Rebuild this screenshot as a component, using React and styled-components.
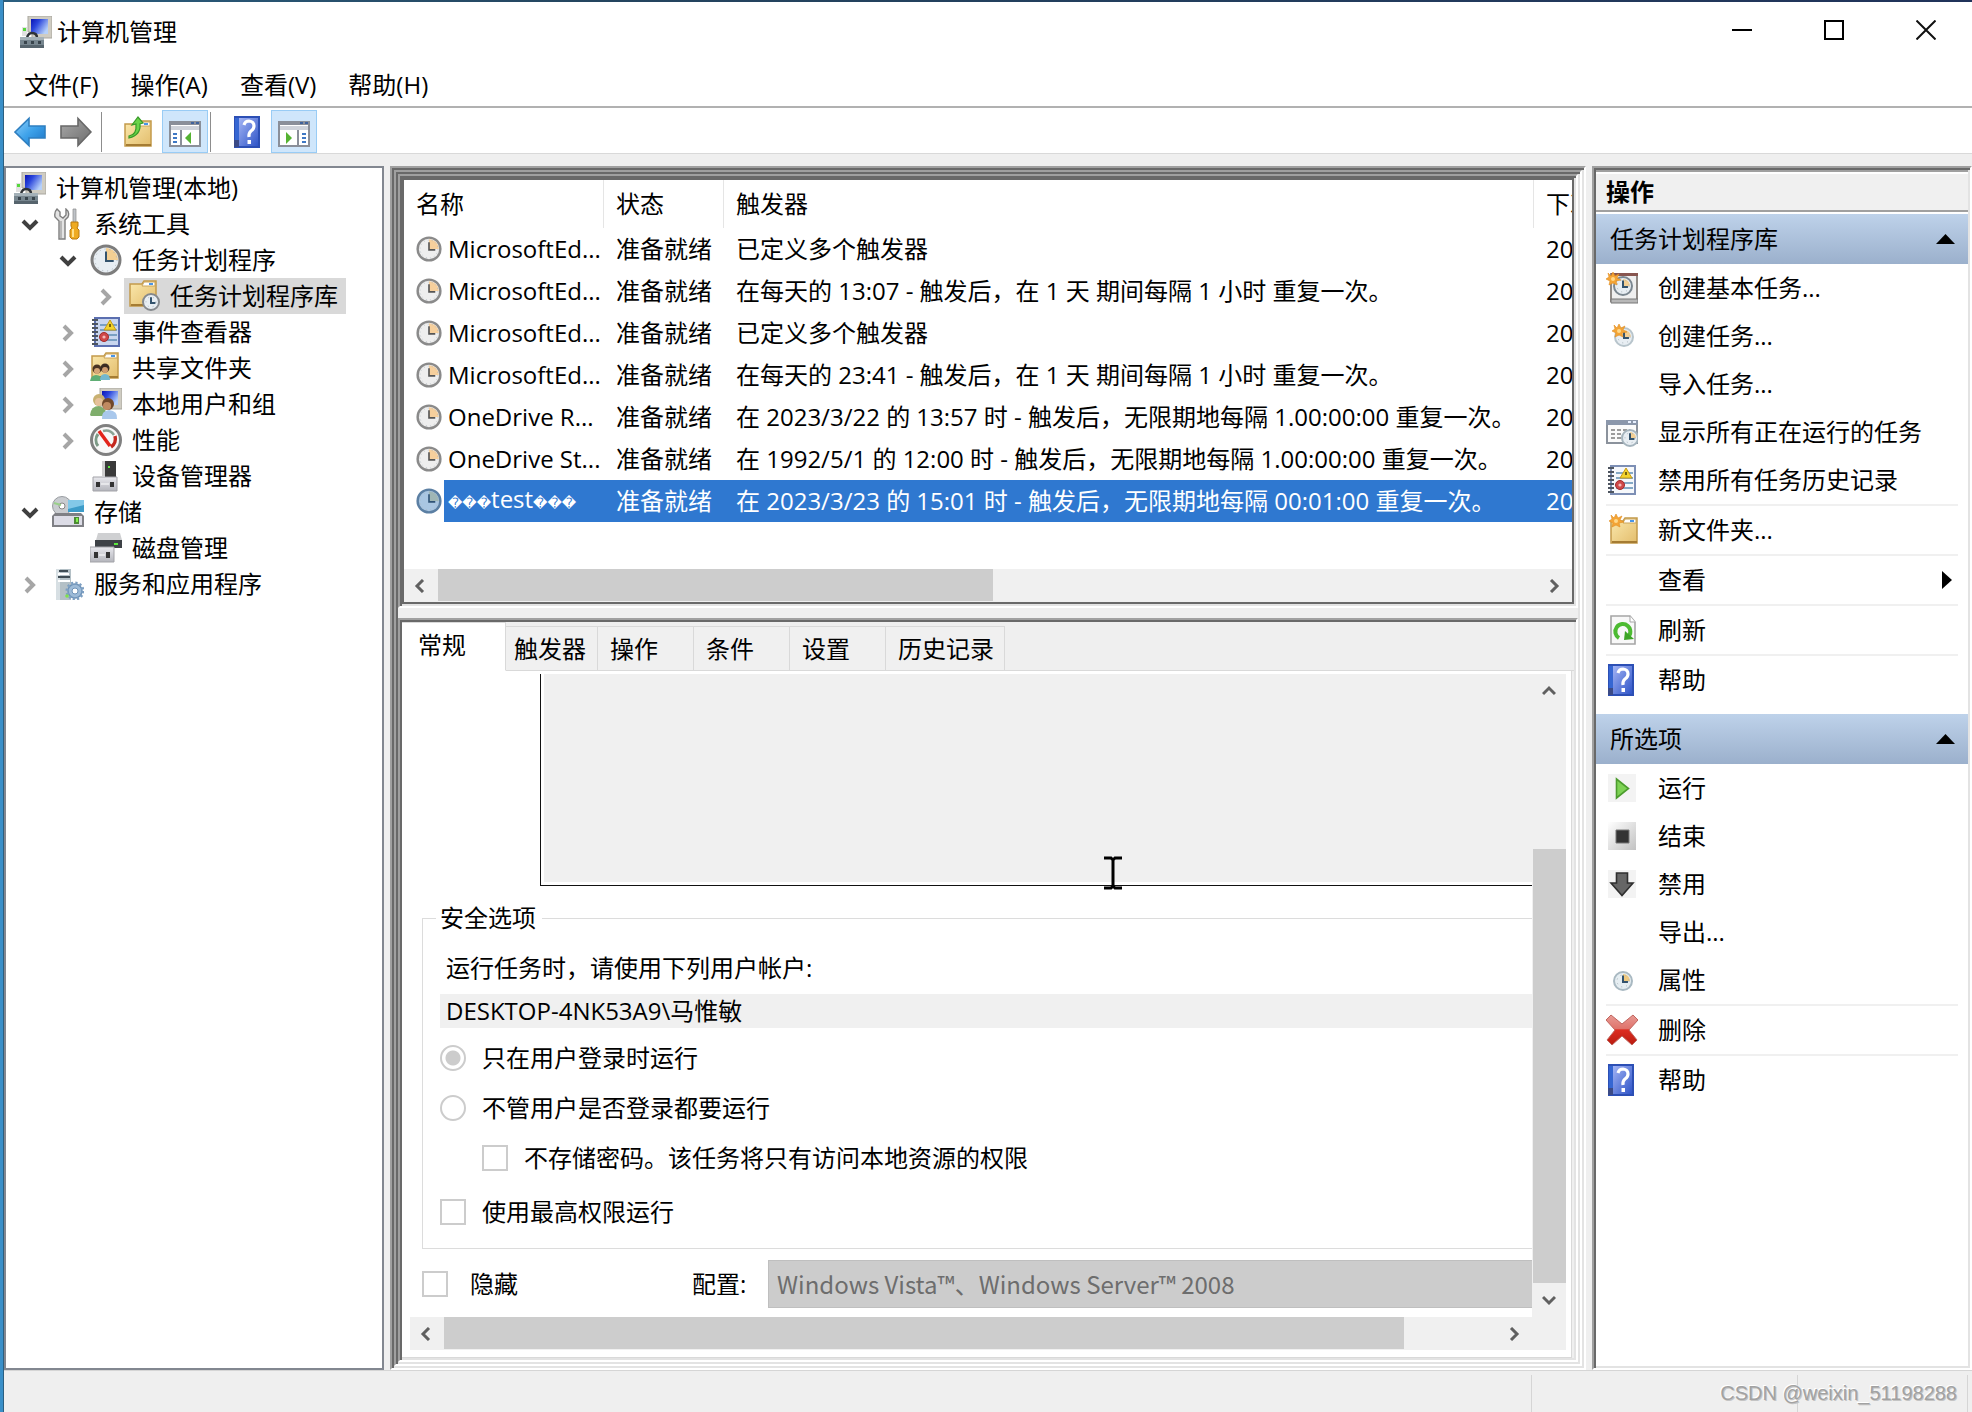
import React from "react";
import styled, { createGlobalStyle, css } from "styled-components";

const FONT = '"Open Sans", "Noto Sans CJK SC", sans-serif';
const FONT_CJK = '"Noto Sans CJK SC", "Noto Sans", sans-serif';

const GlobalStyle = createGlobalStyle`
  * { box-sizing: border-box; }
  body { margin: 0; background: #efefef; }
  button, input, select, textarea { font: inherit; color: inherit; margin: 0; }
  button { border: 0; padding: 0; background: none; text-align: left; cursor: default; }
`;

/* ---------- window frame ---------- */

const Desktop = styled.div`
  min-height: 100vh;
  display: flex;
  flex-direction: column;
  padding: 2px 0 0 4px;
  background: linear-gradient(90deg, #3a8fc8 0, #3a8fc8 3px, #2b5f80 3px, #24455f 30%, #20335a 100%);
  font: 400 24px/36px ${FONT};
  color: #000;
`;

const Window = styled.div`
  flex: 1;
  display: flex;
  flex-direction: column;
  background: #efefef;
`;

const TitleBar = styled.header`
  display: flex;
  height: 60px;
  padding-left: 16px;
  background: #fff;
`;

const Title = styled.h1`
  flex: 1;
  display: flex;
  align-items: center;
  gap: 5px;
  margin: 0;
  font-size: 24px;
  font-weight: 400;
`;

const CaptionButton = styled.button`
  width: 92px;
  height: 56px;
  display: grid;
  place-items: center;
`;

const MenuBar = styled.nav`
  display: flex;
  height: 46px;
  padding-left: 4px;
  background: #fff;
  border-bottom: 2px solid #b1b1b1;
`;

const MenuButton = styled.button`
  padding: 2px 16px 0;
`;

const ToolBar = styled.div`
  display: flex;
  height: 46px;
  padding: 2px 0 0 3px;
  background: #fff;
  border-bottom: 1px solid #d9d9d9;
`;

const ToolButton = styled.button`
  width: 46px;
  height: 43px;
  display: grid;
  place-items: center;
  border: 1px solid ${(p) => (p.$on ? "#99ccf5" : "transparent")};
  background: ${(p) => (p.$on ? "#cfe6fb" : "transparent")};
`;

const ToolDivider = styled.span`
  width: 1px;
  height: 40px;
  margin: 2px 14px 0 2px;
  background: #8d8d8d;
`;

const Body = styled.main`
  flex: 1;
  display: grid;
  grid-template-columns: 380px minmax(0, 1fr) 380px;
  gap: 6px;
  padding-top: 12px;
`;

const StatusBar = styled.footer`
  position: relative;
  display: grid;
  grid-template-columns: 1fr 266px 170px 4px;
  height: 42px;
  padding-top: 4px;
  border-top: 1px solid #d5d5d5;
`;

const StatusCell = styled.span`
  border-right: 1px solid #d5d5d5;
`;

const Watermark = styled.span`
  position: absolute;
  right: 15px;
  bottom: 1px;
  font: 20px/36px "Liberation Sans", sans-serif;
  color: #a2a2a2;
  text-shadow: 1px 1px 0 #c4c4c4, -1px -1px 0 #fff;
`;

/* ---------- tree ---------- */

const TreePane = styled.ul`
  margin: 0;
  padding: 2px 0 0;
  list-style: none;
  background: #fff;
  border: 2px solid #828790;
`;

const TreeRow = styled.li`
  display: flex;
  height: 36px;
  padding-left: ${(p) => (p.$level ? 8 + (p.$level - 1) * 38 : 4)}px;
`;

const Twisty = styled.button`
  width: 32px;
  margin-right: 2px;
  padding-top: 2px;
  display: grid;
  place-items: center;
`;

const TreeLabel = styled.button`
  display: flex;
  align-items: center;
  gap: 10px;
  padding: 0 8px 0 4px;
  background: ${(p) => (p.$selected ? "#d9d9d9" : "transparent")};
`;

/* ---------- sunken frames ---------- */

const sunken = css`
  border: 2px solid;
  border-color: #a0a0a0 #fff #fff #a0a0a0;
  box-shadow: inset 2px 2px 0 #696969, inset -2px -2px 0 #e3e3e3;
  padding: 2px;
`;

const Frame = styled.div`
  ${sunken}
  display: flex;
  flex-direction: column;
  min-width: 0;
  & > * { flex: 1; }
`;

const Split = styled.div`
  display: flex;
  flex-direction: column;
  gap: 10px;
  min-width: 0;
`;

const ListFrame = styled.section`
  ${sunken}
  height: 434px;
`;

const ListBox = styled.div`
  height: 100%;
  display: flex;
  flex-direction: column;
  background: #fff;
  border: 2px solid #696969;
`;

const TaskTable = styled.table`
  width: 100%;
  table-layout: fixed;
  border-collapse: separate;
  border-spacing: 0;
`;

const HeadCell = styled.th`
  height: 48px;
  padding: 0 0 0 12px;
  font-weight: 400;
  text-align: left;
  white-space: nowrap;
  overflow: hidden;
  border-right: ${(p) => (p.$last ? 0 : 1)}px solid #e5e5e5;
`;

const Cell = styled.td`
  height: 42px;
  padding: 0 0 0 12px;
  white-space: nowrap;
  overflow: hidden;
  color: ${(p) => (p.$selected ? "#fff" : "#000")};
  background: ${(p) => (p.$selected ? "#2f78d0" : "#fff")};
`;

const NameCell = styled(Cell)`
  background: ${(p) => (p.$selected ? "linear-gradient(90deg, #fff 40px, #2f78d0 40px)" : "#fff")};
`;

const NameBox = styled.div`
  display: flex;
  align-items: center;
  gap: 6px;
`;

const Unknown = styled.span`
  font-family: "DejaVu Sans", sans-serif;
  font-size: 14px;
`;

const Fill = styled.div`
  flex: 1;
`;

/* ---------- scroll bars ---------- */

const HBar = styled.div`
  display: grid;
  grid-template-columns: 34px minmax(0, 1fr) 38px;
  height: 33px;
  background: #f0f0f0;
`;

const VBar = styled.div`
  display: grid;
  grid-template-rows: 34px minmax(0, 1fr) 34px;
  width: 34px;
  background: #f0f0f0;
`;

const ScrollButton = styled.button`
  display: grid;
  place-items: center;
`;

const HTrack = styled.div`
  display: flex;
  padding-bottom: 1px;
`;

const VTrack = styled.div`
  display: flex;
  flex-direction: column;
  justify-content: flex-end;
  padding-left: 1px;
`;

const Thumb = styled.div`
  background: #cdcdcd;
`;

/* ---------- details ---------- */

const DetailFrame = styled.section`
  ${sunken}
  flex: 1;
  display: flex;
  flex-direction: column;
  min-height: 0;
`;

const TabList = styled.div`
  display: flex;
  align-items: flex-end;
  height: 49px;
  box-shadow: inset 0 -1px 0 #d9d9d9;
`;

const Tab = styled.button`
  min-width: ${(p) => (p.$selected ? 104 : p.$tight ? 92 : 96)}px;
  height: ${(p) => (p.$selected ? 49 : 45)}px;
  padding: 0 10px ${(p) => (p.$selected ? 4 : 0)}px ${(p) => (p.$selected ? 16 : p.$tight ? 8 : 12)}px;
  border: 1px solid #d9d9d9;
  border-left: 0;
  border-bottom-color: ${(p) => (p.$selected ? "#fff" : "#d9d9d9")};
  background: ${(p) => (p.$selected ? "#fff" : "#f0f0f0")};
`;

const TabPage = styled.div`
  flex: 1;
  display: grid;
  grid-template-columns: minmax(0, 1fr) 34px;
  grid-template-rows: minmax(0, 1fr) 33px;
  margin-right: 2px;
  padding: 3px 5px 7px 8px;
  background: #fff;
  border-right: 1px solid #d9d9d9;
  border-bottom: 1px solid #d9d9d9;
`;

const Form = styled.form`
  position: relative;
  overflow: hidden;
`;

const Description = styled.textarea`
  display: block;
  width: calc(100% - 130px);
  height: 212px;
  margin-left: 130px;
  padding: 0 0 3px 3px;
  border: solid #111;
  border-width: 0 0 1px 1px;
  border-radius: 0;
  outline: 0;
  resize: none;
  background: #f0f0f0 content-box;
`;

const Group = styled.fieldset`
  margin: 14px 0 0 12px;
  padding: 0 0 11px 17px;
  border: 1px solid #dcdcdc;
  border-right: 0;
`;

const Legend = styled.legend`
  margin-left: -4px;
  padding: 0 6px 0 4px;
`;

const AccountLabel = styled.label`
  display: block;
  padding: 14px 0 8px 6px;
`;

const AccountInput = styled.input`
  display: block;
  width: 100%;
  height: 34px;
  margin-bottom: 5px;
  padding: 0 6px;
  border: 0;
  border-radius: 0;
  background: #f0f0f0;
`;

const Option = styled.label`
  display: flex;
  align-items: center;
  gap: 16px;
  height: 50px;
  margin-top: ${(p) => (p.$apart ? 4 : 0)}px;
  padding-left: ${(p) => (p.$nested ? 42 : 0)}px;
`;

const Tick = styled.input`
  appearance: none;
  flex: none;
  width: 26px;
  height: 26px;
  border: 2px solid #ccc;
  background: #fff;
`;

const Radio = styled(Tick)`
  border-radius: 50%;
  &:checked { background: radial-gradient(circle, #ccc 7px, #fff 8px); }
`;

const BottomRow = styled.div`
  display: grid;
  grid-template-columns: 270px 76px minmax(0, 1fr);
  align-items: center;
  margin: 11px 0 0 12px;
`;

const HiddenOption = styled.label`
  display: flex;
  align-items: center;
  gap: 22px;
`;

const ConfigSelect = styled.select`
  appearance: none;
  width: 100%;
  height: 48px;
  padding: 0 8px;
  border: solid #bfbfbf;
  border-width: 1px 0 1px 1px;
  border-radius: 0;
  background: #ccc;
  color: #6d6d6d;
  font-family: ${FONT_CJK};
  opacity: 1;
`;

const Pointer = styled.svg`
  position: absolute;
  left: 693px;
  top: 182px;
`;

/* ---------- actions ---------- */

const ActionPane = styled.aside`
  display: flex;
  flex-direction: column;
  border: 2px solid;
  border-color: #a0a0a0 #fff #fff #a0a0a0;
  box-shadow: inset 2px 2px 0 #696969, inset -2px -2px 0 #e3e3e3;
  padding: 2px;
  background: #fff;
`;

const ActionTitle = styled.h2`
  height: 42px;
  margin: 0 0 2px;
  padding: 2px 10px 0;
  font-size: 24px;
  font-weight: 700;
  background: #f0f0f0;
  border-top: 2px solid #a0a0a0;
  border-bottom: 2px solid #a0a0a0;
  box-shadow: inset 0 2px 0 #fff;
`;

const SectionHead = styled.button`
  display: flex;
  align-items: center;
  justify-content: space-between;
  height: 50px;
  padding: 0 13px 0 14px;
  background: linear-gradient(#bed2ea, #9bb0cc);
`;

const ActionList = styled.ul`
  margin: 0 10px 10px;
  padding: 0;
  list-style: none;
`;

const ActionItem = styled.li`
  border-top: ${(p) => (p.$divided ? 2 : 0)}px solid #f0f0f0;
`;

const ActionButton = styled.button`
  display: grid;
  grid-template-columns: 32px 1fr auto;
  align-items: center;
  gap: 20px;
  width: 100%;
  height: 48px;
  padding-right: 6px;
`;

/* ---------- icons ---------- */

const Svg = ({ size = 32, children }) => (
  <svg width={size} height={size} viewBox="0 0 32 32" aria-hidden="true" style={{ display: "block" }}>
    {children}
  </svg>
);

const Defs = () => (
  <svg width="0" height="0" style={{ position: "absolute" }} aria-hidden="true">
    <defs>
      <linearGradient id="screen" x1="0" y1="0" x2="1" y2="0.6">
        <stop offset="0" stopColor="#0a14b4" /><stop offset="0.4" stopColor="#2b46dc" /><stop offset="1" stopColor="#b5d0fa" />
      </linearGradient>
      <linearGradient id="folder" x1="0" y1="0" x2="1" y2="1">
        <stop offset="0" stopColor="#fbe9ae" /><stop offset="1" stopColor="#e3bd6c" />
      </linearGradient>
      <linearGradient id="blue" x1="0" y1="0" x2="1" y2="1">
        <stop offset="0" stopColor="#8fd0fb" /><stop offset="0.5" stopColor="#3ea2ea" /><stop offset="1" stopColor="#1a72c4" />
      </linearGradient>
      <linearGradient id="grey" x1="0" y1="0" x2="1" y2="1">
        <stop offset="0" stopColor="#a9a9a9" /><stop offset="1" stopColor="#6c6c6c" />
      </linearGradient>
      <linearGradient id="book" x1="0" y1="0" x2="1" y2="1">
        <stop offset="0" stopColor="#a3b4f4" /><stop offset="1" stopColor="#2f55c8" />
      </linearGradient>
      <linearGradient id="metal" x1="0" y1="0" x2="0" y2="1">
        <stop offset="0" stopColor="#e9e9ee" /><stop offset="1" stopColor="#b4b5bc" />
      </linearGradient>
      <linearGradient id="stop" x1="0" y1="0" x2="1" y2="1">
        <stop offset="0" stopColor="#fff" /><stop offset="1" stopColor="#c2c2c2" />
      </linearGradient>
      <linearGradient id="red" x1="0" y1="0" x2="0" y2="1">
        <stop offset="0" stopColor="#e79a94" /><stop offset="0.45" stopColor="#e0746c" /><stop offset="0.5" stopColor="#dd2c20" /><stop offset="1" stopColor="#b81c10" />
      </linearGradient>
    </defs>
  </svg>
);

const Face = ({ x = 16, y = 16, r = 14, ring = "#7d7d7d", fill = "#e8eef3", wedge = "#f3cf93", hand = "#33536d" }) => (
  <g>
    <circle cx={x} cy={y} r={r} fill={fill} stroke={ring} strokeWidth={r > 10 ? 3 : 2} />
    <path d={`M${x} ${y}V${y - r + 2}A${r - 2} ${r - 2} 0 0 1 ${x + r - 2} ${y}Z`} fill={wedge} />
    <circle cx={x} cy={y} r={r - 3} fill="none" stroke="#a9b4bc" strokeWidth="1" strokeDasharray="1 4" />
    <path d={`M${x} ${y - r * 0.6}V${y + 1}H${x + r * 0.55}`} fill="none" stroke={hand} strokeWidth="2" />
  </g>
);

const FolderShape = ({ x = 0, y = 0 }) => (
  <g transform={`translate(${x} ${y})`}>
    <path d="M2 6H14L16 3H28V28H2Z" fill="url(#folder)" stroke="#c39a4b" strokeWidth="1.5" />
    <path d="M16 4H27V8H14Z" fill="#fff" stroke="#c9a55c" strokeWidth="1" />
    <path d="M21 5H25V7H21Z" fill="#4a95e6" />
    <path d="M3 27H28" stroke="#a57c33" strokeWidth="2" />
  </g>
);

const Star = ({ x = 7, y = 7 }) => (
  <g transform={`translate(${x} ${y})`}>
    <path d="M0 -7L2 -3L6 -5L4 -1L8 1L3 2L4 6L0 4L-4 6L-3 2L-7 0L-4 -2L-5 -6L-2 -3Z" fill="#f4a536" stroke="#e08b1c" strokeWidth="0.6" />
    <circle r="2" fill="#ffd98a" />
  </g>
);

const ComputerIcon = () => (
  <Svg>
    <path d="M8 0H32V22H12V16H8Z" fill="#cfccc2" stroke="#a9a79f" />
    <path d="M11 3H28V18H11Z" fill="url(#screen)" />
    <path d="M2 11H7V20H2Z" fill="#e2e2e2" /><path d="M3 12H6V15H3Z" fill="#56d83c" />
    <path d="M7 22Q8 17 12 17Q17 17 17 22" fill="none" stroke="#2f3338" strokeWidth="2.500" />
    <path d="M0 21H24V31H0Z" fill="#77868f" /><path d="M0 21H24V24H0Z" fill="#a4b1b8" />
    <path d="M0 29H24V32H0Z" fill="#56646d" />
    <path d="M4 25H7V28H4ZM11 25H14V28H11ZM18 25H21V28H18Z" fill="#38444c" />
  </Svg>
);

const ToolsIcon = () => (
  <Svg>
    <path d="M5 1L8 4V8L11 10L14 7V1Q18 4 16 9L13 12V31H7V13L3 9Q2 4 5 1Z" fill="#e3e3e3" stroke="#7e7e7e" strokeWidth="1.4" />
    <path d="M9 13V30" stroke="#a9a9a9" strokeWidth="1.5" />
    <path d="M21 1H24V15H21Z" fill="#bfc3c8" stroke="#8a8a8a" strokeWidth="0.7" />
    <path d="M19 14H26V18L25 20L27 22V29L25 31H20L18 29V22L20 20L19 18Z" fill="#efab22" stroke="#b97a0e" />
    <path d="M21 21V29" stroke="#ffe08a" strokeWidth="2" />
  </Svg>
);

const ClockIcon = ({ size }) => <Svg size={size}><Face /></Svg>;

const TaskClock = ({ selected }) => (
  <svg width="26" height="26" viewBox="0 0 32 32" aria-hidden="true" style={{ flex: "none" }}>
    <Face ring={selected ? "#5b7fa3" : "#8a8a8a"} fill={selected ? "#a9c6e2" : "#eeeeee"} wedge={selected ? "#9fb6b5" : "#f6cf9c"} hand={selected ? "#2f5377" : "#555"} />
  </svg>
);

const FolderClockIcon = () => <Svg><FolderShape y={-2} /><Face x={23} y={22} r={8} wedge="#e8eef3" ring="#85898d" /></Svg>;

const Notebook = ({ page = "#c9d6ee", edge = "#5b6fb0" }) => (
  <Svg>
    <path d="M5 2H29V30H5Z" fill={page} stroke={edge} strokeWidth="2" />
    <path d="M10 9H27M10 14H27M10 19H27M10 24H27" stroke="#5f8db4" strokeWidth="1.4" />
    <path d="M2 4H8M2 8H8M2 12H8M2 16H8M2 20H8M2 24H8M2 28H8" stroke="#4e5560" strokeWidth="2" />
    <path d="M20 4L26 14H14Z" fill="#f3d32b" stroke="#c79a18" /><path d="M20 8V11" stroke="#4c3b00" strokeWidth="1.5" />
    <circle cx="14" cy="21" r="4.5" fill="#cf4848" stroke="#a52b2b" /><circle cx="14" cy="21" r="1.6" fill="#f4b8b8" />
  </Svg>
);

const People = () => (
  <g>
    <circle cx="7" cy="15" r="4.500" fill="#4a3322" /><circle cx="7" cy="17" r="3" fill="#d7a777" />
    <path d="M0 27Q1 21 6 21Q12 21 11 27Z" fill="#5fae74" />
    <circle cx="15" cy="14" r="4.500" fill="#3a2c22" /><circle cx="15" cy="16" r="3" fill="#cf9d70" />
    <path d="M10 26Q10 20 15 20Q20 20 20 26Z" fill="#74b8cf" />
  </g>
);

const SharedIcon = () => <Svg><FolderShape y={-2} /><g transform="translate(0 2)"><People /></g></Svg>;

const UsersIcon = () => (
  <Svg>
    <path d="M10 0H32V21H10Z" fill="#cfccc2" stroke="#a9a79f" /><path d="M12 3H28V17H12Z" fill="url(#screen)" />
    <circle cx="9" cy="12" r="6" fill="#c9b172" /><circle cx="9" cy="14" r="4" fill="#e6c19b" />
    <path d="M0 27Q1 18 9 18Q17 20 16 28H1Z" fill="#7fae6c" />
    <circle cx="18" cy="16" r="6" fill="#70482a" /><circle cx="17" cy="18" r="4" fill="#c08a61" />
    <path d="M12 31Q11 23 19 22Q28 23 27 31Z" fill="#a9c8ec" />
  </Svg>
);

const GaugeIcon = () => (
  <Svg>
    <circle cx="16" cy="16" r="14.5" fill="#f8f8f8" stroke="#808080" strokeWidth="3" />
    <path d="M8 22A10 10 0 0 1 8 10" fill="none" stroke="#7c9a86" strokeWidth="3" />
    <path d="M13 7A10 10 0 0 1 24 11" fill="none" stroke="#8aa294" strokeWidth="2.5" />
    <path d="M25 12A10 10 0 0 1 21 23" fill="none" stroke="#c3281e" strokeWidth="3.5" />
    <path d="M9 7L20 22" stroke="#e2241b" strokeWidth="3.500" />
  </Svg>
);

const DeviceIcon = () => (
  <Svg>
    <path d="M12 1H25V16H12Z" fill="#cfcfcf" /><path d="M15 1H26V17H15Z" fill="#3a3a3a" />
    <path d="M18 6H20V8H18Z" fill="#5bea3e" />
    <path d="M3 17H27V31H3Z" fill="url(#metal)" stroke="#a3a3a8" />
    <path d="M6 22H10V27H6ZM20 22H24V27H20Z" fill="#333" /><path d="M11 24H19" stroke="#fff" />
  </Svg>
);

const StorageIcon = () => (
  <Svg>
    <circle cx="10" cy="10" r="9.5" fill="#c9ccd0" stroke="#989ca0" /><circle cx="10" cy="10" r="3" fill="#fff" stroke="#868686" />
    <path d="M2 7L9 9" stroke="#9ad08a" strokeWidth="2" />
    <path d="M16 4H32V16H16Z" fill="#3d9cc9" /><path d="M16 4H32V9L16 13Z" fill="#83c8e8" />
    <path d="M3 17H29L32 20V31H0V20Z" fill="#7f8085" /><path d="M2 20H30V29H2Z" fill="#dcdce6" />
    <path d="M22 21H27V28H22Z" fill="#4d8a35" /><path d="M24 22H26V26H24Z" fill="#82f24c" />
  </Svg>
);

const DiskIcon = () => (
  <Svg>
    <path d="M8 1H30L32 8H6Z" fill="#cfd0d2" /><path d="M5 8H32V16H5Z" fill="#3d4146" />
    <path d="M24 11H28V13H24Z" fill="#5bea3e" />
    <path d="M0 15H24V30H0Z" fill="url(#metal)" stroke="#a3a3a8" />
    <path d="M4 20H8V26H4ZM16 20H20V26H16Z" fill="#333" /><path d="M9 23H15" stroke="#fff" />
  </Svg>
);

const ServicesIcon = () => (
  <Svg>
    <path d="M4 1H19V32H4Z" fill="#b4c0c6" /><path d="M4 1H8V32H4Z" fill="#d7dfe3" />
    <path d="M7 3H16M6 9H18" stroke="#3f4c54" strokeWidth="2" /><path d="M6 6H17M6 13H18" stroke="#fff" strokeWidth="2" />
    <circle cx="23" cy="23" r="7" fill="#9dbbd8" stroke="#6f93b8" strokeWidth="1.5" />
    <circle cx="23" cy="23" r="8" fill="none" stroke="#7d9fc2" strokeWidth="3" strokeDasharray="2.1 2.1" />
    <circle cx="23" cy="23" r="3" fill="#fff" stroke="#6f93b8" /><circle cx="15" cy="28" r="1.8" fill="#7fe04f" />
  </Svg>
);

const BackIcon = () => (
  <Svg><path d="M1 16L15 2.500V10H31V22H15V29.500Z" fill="url(#blue)" stroke="#2f7fc0" strokeWidth="1.6" /></Svg>
);
const ForwardIcon = () => (
  <Svg><path d="M31 16L18 2.500V10H1V22H18V29.500Z" fill="url(#grey)" stroke="#686868" strokeWidth="1.6" /></Svg>
);
const UpFolderIcon = () => (
  <Svg>
    <FolderShape y={2} />
    <path d="M6 20Q14 19 13 8L9 9L15 1L20 7L17 8Q18 19 6 22Z" fill="#6ad44a" stroke="#389a28" strokeWidth="1.2" />
  </Svg>
);
const PaneIcon = ({ right }) => (
  <Svg>
    <path d="M1 6H31V30H1Z" fill="#fff" stroke="#8a8f99" strokeWidth="2" />
    <path d="M0 5H32V9H0Z" fill="#8a8f99" /><path d="M22 6H25V8H22ZM27 6H30V8H27Z" fill="#40639c" />
    <path d="M2 10H30V14H2Z" fill="#cfd3da" />
    <path d={right ? "M20 14V30" : "M12 14V30"} stroke="#8a8f99" strokeWidth="2" />
    <path d={right ? "M24 18H28M24 22H28M24 26H28" : "M4 18H8M4 22H8M4 26H8"} stroke="#3f78c4" strokeWidth="2" />
    <path d={right ? "M8 16L14 22L8 28Z" : "M22 16L16 22L22 28Z"} fill="#55b332" />
  </Svg>
);
const HelpIcon = () => (
  <Svg>
    <path d="M2 0H28V32H2Z" fill="#2c4fb5" /><path d="M7 2H26V30H7Z" fill="url(#book)" />
    <path d="M3 2H7V30H3Z" fill="#3566d2" /><path d="M2 24H7V31H2Z" fill="#3b4a86" />
    <path d="M12 9Q13 5 17 5Q22 5.500 22 10Q22 13 19 15Q16.500 17 17 21" fill="none" stroke="#fff" strokeWidth="3.200" />
    <path d="M15.500 24H19V28H15.500Z" fill="#fff" />
  </Svg>
);
const BasicTaskIcon = () => (
  <Svg>
    <path d="M5 2H31V29H5Z" fill="#efefef" stroke="#8f8a86" strokeWidth="2" /><path d="M5 1H32V4H5Z" fill="#885650" />
    <path d="M5 27H32V31H5Z" fill="#b8b8b8" stroke="#777" /><Face x={17} y={14} r={9} ring="#7b8790" /><Star />
  </Svg>
);
const NewTaskIcon = () => <Svg><Face x={18} y={17} r={9} ring="#b8c5cc" /><Star x={13} y={11} /></Svg>;
const RunningIcon = () => (
  <Svg>
    <path d="M1 5H31V27H1Z" fill="#fbfbfb" stroke="#8b929c" strokeWidth="2" /><path d="M0 4H32V9H0Z" fill="#8b97ab" />
    <path d="M22 5H25V7H22ZM27 5H30V7H27Z" fill="#e8f0ff" />
    <path d="M5 14H24M5 18H20M5 22H16" stroke="#9c9c9c" strokeWidth="2" strokeDasharray="4 2" />
    <Face x={24} y={22} r={8} ring="#a5b4bd" />
  </Svg>
);
const NewFolderIcon = () => <Svg><FolderShape x={3} y={1} /><Star x={10} y={7} /></Svg>;
const RefreshIcon = () => (
  <Svg>
    <path d="M5 2H24L29 8V30H5Z" fill="#f8f8f8" stroke="#a5a5a5" strokeWidth="1.6" /><path d="M24 2V8H29" fill="#fff" stroke="#a5a5a5" />
    <path d="M13 24A7.500 7.500 0 1 1 22 23" fill="none" stroke="#4dbb32" strokeWidth="4" />
    <path d="M19 17L28 25L18 26Z" fill="#3da526" />
  </Svg>
);
const RunIcon = () => (
  <Svg><path d="M2 2H30V30H2Z" fill="#f3f3f3" /><path d="M10.500 7V26L22.500 16.500Z" fill="#7dd254" stroke="#4c9c2e" strokeWidth="1.6" /></Svg>
);
const EndIcon = () => (
  <Svg><path d="M2 2H30V30H2Z" fill="url(#stop)" /><path d="M10 10H23V23H10Z" fill="#333" stroke="#777" /></Svg>
);
const DisableIcon = () => (
  <Svg><path d="M2 2H30V30H2Z" fill="#f3f3f3" /><path d="M10.500 5H21.500V15H27L16 27.500L5 15H10.500Z" fill="#666" stroke="#2f2f2f" strokeWidth="1.6" /></Svg>
);
const PropertiesIcon = () => <Svg><Face x={17} y={17} r={9} ring="#a9b9c2" fill="#e6eef2" wedge="#efc97f" /></Svg>;
const DeleteIcon = () => (
  <Svg><path d="M5 1L16 10L27 1L32 6L23 16L31 26L26 31L16 22L6 31L1 26L9 16L0 6Z" fill="url(#red)" stroke="#c0655e" strokeWidth="1" strokeLinejoin="round" /></Svg>
);

const ChevronDown = () => (
  <svg width="18" height="12" viewBox="0 0 18 12" aria-hidden="true"><path d="M2 2L9 9L16 2" fill="none" stroke="#404040" strokeWidth="4" /></svg>
);
const ChevronRight = () => (
  <svg width="12" height="18" viewBox="0 0 12 18" aria-hidden="true"><path d="M2 2L9 9L2 16" fill="none" stroke="#a6a6a6" strokeWidth="4" /></svg>
);
const arrows = {
  left: "M9 1L3 7L9 13",
  right: "M5 1L11 7L5 13",
  up: "M1 10L7 4L13 10",
  down: "M1 4L7 10L13 4",
};
const Arrow = ({ dir }) => (
  <svg width="14" height="14" viewBox="0 0 14 14" aria-hidden="true"><path d={arrows[dir]} fill="none" stroke="#606060" strokeWidth="3" /></svg>
);
const TriangleUp = () => <svg width="19" height="10" aria-hidden="true"><path d="M0 10L9.500 0L19 10Z" /></svg>;
const TriangleRight = () => <svg width="10" height="18" aria-hidden="true"><path d="M0 0L10 9L0 18Z" /></svg>;

/* ---------- data ---------- */

const tree = [
  { level: 0, label: "计算机管理(本地)", Icon: ComputerIcon },
  { level: 1, label: "系统工具", Icon: ToolsIcon, state: "open" },
  { level: 2, label: "任务计划程序", Icon: ClockIcon, state: "open" },
  { level: 3, label: "任务计划程序库", Icon: FolderClockIcon, state: "closed", selected: true },
  { level: 2, label: "事件查看器", Icon: Notebook, state: "closed" },
  { level: 2, label: "共享文件夹", Icon: SharedIcon, state: "closed" },
  { level: 2, label: "本地用户和组", Icon: UsersIcon, state: "closed" },
  { level: 2, label: "性能", Icon: GaugeIcon, state: "closed" },
  { level: 2, label: "设备管理器", Icon: DeviceIcon },
  { level: 1, label: "存储", Icon: StorageIcon, state: "open" },
  { level: 2, label: "磁盘管理", Icon: DiskIcon },
  { level: 1, label: "服务和应用程序", Icon: ServicesIcon, state: "closed" },
];

const garbled = <Unknown>{"\uFFFD\uFFFD\uFFFD"}</Unknown>;

const tasks = [
  ["MicrosoftEd...", "已定义多个触发器"],
  ["MicrosoftEd...", "在每天的 13:07 - 触发后，在 1 天 期间每隔 1 小时 重复一次。"],
  ["MicrosoftEd...", "已定义多个触发器"],
  ["MicrosoftEd...", "在每天的 23:41 - 触发后，在 1 天 期间每隔 1 小时 重复一次。"],
  ["OneDrive R...", "在 2023/3/22 的 13:57 时 - 触发后，无限期地每隔 1.00:00:00 重复一次。"],
  ["OneDrive St...", "在 1992/5/1 的 12:00 时 - 触发后，无限期地每隔 1.00:00:00 重复一次。"],
  [<>{garbled}test{garbled}</>, "在 2023/3/23 的 15:01 时 - 触发后，无限期地每隔 00:01:00 重复一次。"],
];

const tabs = ["常规", "触发器", "操作", "条件", "设置", "历史记录"];

const libraryActions = [
  { label: "创建基本任务...", Icon: BasicTaskIcon },
  { label: "创建任务...", Icon: NewTaskIcon },
  { label: "导入任务..." },
  { label: "显示所有正在运行的任务", Icon: RunningIcon },
  { label: "禁用所有任务历史记录", Icon: () => <Notebook page="#f6f8fb" edge="#7d8fb5" /> },
  { label: "新文件夹...", Icon: NewFolderIcon, divided: true },
  { label: "查看", submenu: true, divided: true },
  { label: "刷新", Icon: RefreshIcon, divided: true },
  { label: "帮助", Icon: HelpIcon, divided: true },
];

const itemActions = [
  { label: "运行", Icon: RunIcon },
  { label: "结束", Icon: EndIcon },
  { label: "禁用", Icon: DisableIcon },
  { label: "导出..." },
  { label: "属性", Icon: PropertiesIcon },
  { label: "删除", Icon: DeleteIcon, divided: true },
  { label: "帮助", Icon: HelpIcon, divided: true },
];

/* ---------- parts ---------- */

const HorizontalScroll = ({ share }) => (
  <HBar>
    <ScrollButton type="button" aria-label="向左滚动"><Arrow dir="left" /></ScrollButton>
    <HTrack><Thumb style={{ width: `${share}%` }} /></HTrack>
    <ScrollButton type="button" aria-label="向右滚动"><Arrow dir="right" /></ScrollButton>
  </HBar>
);

const Actions = ({ title, items }) => (
  <>
    <SectionHead type="button">{title}<TriangleUp /></SectionHead>
    <ActionList>
      {items.map(({ label, Icon, divided, submenu }) => (
        <ActionItem key={label} $divided={divided}>
          <ActionButton type="button">
            {Icon ? <Icon /> : <span />}
            <span>{label}</span>
            {submenu && <TriangleRight />}
          </ActionButton>
        </ActionItem>
      ))}
    </ActionList>
  </>
);

export default function App() {
  return (
    <Desktop>
      <GlobalStyle />
      <Defs />
      <Window>
        <TitleBar>
          <Title><ComputerIcon />计算机管理</Title>
          <CaptionButton aria-label="最小化"><svg width="20" height="20"><path d="M0 10H20" stroke="#000" strokeWidth="2" /></svg></CaptionButton>
          <CaptionButton aria-label="最大化"><svg width="20" height="20"><path d="M1 1H19V19H1Z" fill="none" stroke="#000" strokeWidth="2" /></svg></CaptionButton>
          <CaptionButton aria-label="关闭"><svg width="20" height="20"><path d="M0.500 0.500L19.500 19.500M19.500 0.500L0.500 19.500" stroke="#111" strokeWidth="2" /></svg></CaptionButton>
        </TitleBar>
        <MenuBar>
          {["文件(F)", "操作(A)", "查看(V)", "帮助(H)"].map((m) => <MenuButton key={m}>{m}</MenuButton>)}
        </MenuBar>
        <ToolBar>
          <ToolButton aria-label="后退"><BackIcon /></ToolButton>
          <ToolButton aria-label="前进"><ForwardIcon /></ToolButton>
          <ToolDivider />
          <ToolButton aria-label="上一级"><UpFolderIcon /></ToolButton>
          <ToolButton aria-label="显示控制台树" $on><PaneIcon /></ToolButton>
          <ToolDivider />
          <ToolButton aria-label="帮助"><HelpIcon /></ToolButton>
          <ToolButton aria-label="显示操作窗格" $on><PaneIcon right /></ToolButton>
        </ToolBar>

        <Body>
          <TreePane>
            {tree.map(({ level, label, Icon, state, selected }) => (
              <TreeRow key={label} $level={level}>
                {level > 0 && (state
                  ? <Twisty aria-label={state === "open" ? "折叠" : "展开"}>{state === "open" ? <ChevronDown /> : <ChevronRight />}</Twisty>
                  : <Twisty as="span" />)}
                <TreeLabel $selected={selected}><Icon />{label}</TreeLabel>
              </TreeRow>
            ))}
          </TreePane>

          <Frame>
            <Frame>
              <Split>
                <ListFrame>
                  <ListBox>
                    <TaskTable>
                      <colgroup>
                        <col style={{ width: 200 }} />
                        <col style={{ width: 120 }} />
                        <col />
                        <col style={{ width: 38 }} />
                      </colgroup>
                      <thead>
                        <tr><HeadCell>名称</HeadCell><HeadCell>状态</HeadCell><HeadCell>触发器</HeadCell><HeadCell $last>下次</HeadCell></tr>
                      </thead>
                      <tbody>
                        {tasks.map(([name, trigger], i) => {
                          const selected = i === tasks.length - 1;
                          return (
                            <tr key={i}>
                              <NameCell $selected={selected}><NameBox><TaskClock selected={selected} /><span>{name}</span></NameBox></NameCell>
                              <Cell $selected={selected}>准备就绪</Cell>
                              <Cell $selected={selected}>{trigger}</Cell>
                              <Cell $selected={selected}>20</Cell>
                            </tr>
                          );
                        })}
                      </tbody>
                    </TaskTable>
                    <Fill />
                    <HorizontalScroll share={50.6} />
                  </ListBox>
                </ListFrame>

                <DetailFrame>
                  <TabList role="tablist">
                    {tabs.map((t, i) => (
                      <Tab key={t} type="button" role="tab" aria-selected={i === 0} $selected={i === 0} $tight={i === 1}>{t}</Tab>
                    ))}
                  </TabList>
                  <TabPage>
                    <Form>
                      <Description aria-label="描述" readOnly />
                      <Group>
                        <Legend>安全选项</Legend>
                        <AccountLabel htmlFor="account">运行任务时，请使用下列用户帐户:</AccountLabel>
                        <AccountInput id="account" readOnly value="DESKTOP-4NK53A9\马惟敏" />
                        <Option><Radio type="radio" name="logon" disabled defaultChecked />只在用户登录时运行</Option>
                        <Option><Radio type="radio" name="logon" disabled />不管用户是否登录都要运行</Option>
                        <Option $nested><Tick type="checkbox" disabled />不存储密码。该任务将只有访问本地资源的权限</Option>
                        <Option $apart><Tick type="checkbox" disabled />使用最高权限运行</Option>
                      </Group>
                      <BottomRow>
                        <HiddenOption><Tick type="checkbox" disabled />隐藏</HiddenOption>
                        <label htmlFor="config">配置:</label>
                        <ConfigSelect id="config" disabled>
                          <option>Windows Vista™、Windows Server™ 2008</option>
                        </ConfigSelect>
                      </BottomRow>
                      <Pointer width="20" height="34" viewBox="0 0 20 34" aria-hidden="true">
                        <path d="M1 2H8L10 4L12 2H19M10 3V31M1 32H8L10 30L12 32H19" fill="none" stroke="#000" strokeWidth="3" />
                      </Pointer>
                    </Form>
                    <VBar>
                      <ScrollButton type="button" aria-label="向上滚动"><Arrow dir="up" /></ScrollButton>
                      <VTrack><Thumb style={{ height: "75.4%" }} /></VTrack>
                      <ScrollButton type="button" aria-label="向下滚动"><Arrow dir="down" /></ScrollButton>
                    </VBar>
                    <HorizontalScroll share={91.4} />
                    <VBar as="div" />
                  </TabPage>
                </DetailFrame>
              </Split>
            </Frame>
          </Frame>

          <ActionPane>
            <ActionTitle>操作</ActionTitle>
            <Actions title="任务计划程序库" items={libraryActions} />
            <Actions title="所选项" items={itemActions} />
          </ActionPane>
        </Body>

        <StatusBar>
          <StatusCell /><StatusCell /><StatusCell />
          <Watermark>CSDN @weixin_51198288</Watermark>
        </StatusBar>
      </Window>
    </Desktop>
  );
}
